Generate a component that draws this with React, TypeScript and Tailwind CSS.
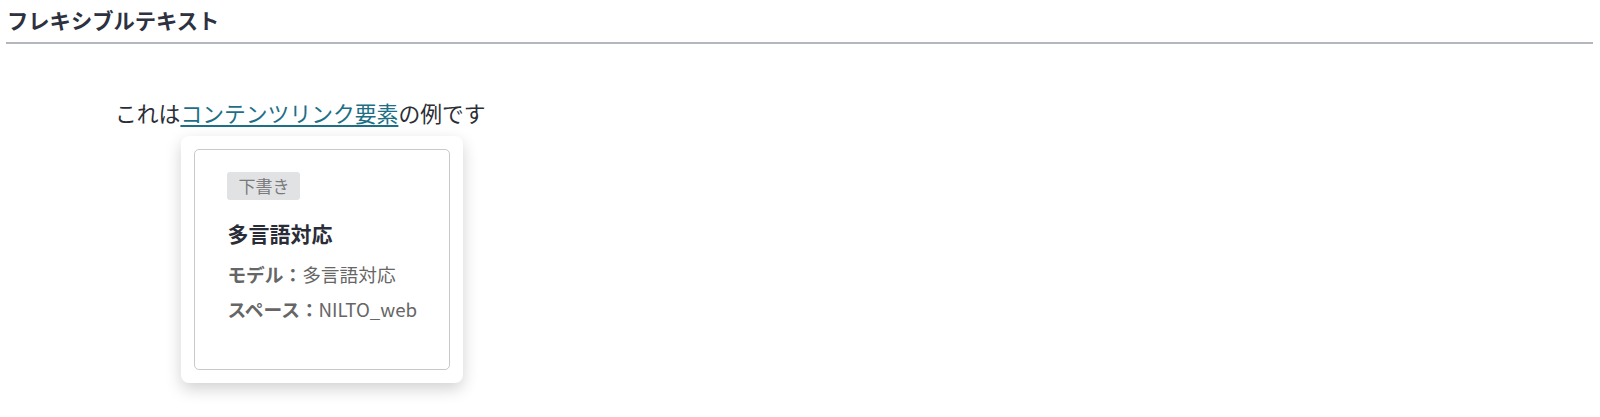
import React from "react";

const font = { fontFamily: '"Noto Sans CJK JP", "Noto Sans", sans-serif' };

export default function App() {
  return (
    <div className="w-[1600px] h-[417px] bg-white text-[#2c2f3a] [text-spacing-trim:space-all]" style={font}>
      <div className="px-[6px] pt-[6px]">
        <h2 className="text-[21.3px] font-bold leading-[28px] pl-[1px] text-[#2e3140] pb-[8px] border-b-2 border-[#b3b6bc] w-[1587px]">
          フレキシブルテキスト
        </h2>
      </div>
      <p className="mt-[54px] ml-[115px] text-[21.8px] leading-[30px] text-[#2b2e36]">
        これは
        <span className="relative inline-block">
          <a href="#" className="text-[#1d6f86] underline underline-offset-[3px] decoration-[1.5px]">
            コンテンツリンク要素
          </a>
          <div className="absolute left-[1px] top-[38px] w-[282px] h-[247px] bg-white rounded-[8px] shadow-[0_6px_16px_rgba(0,0,0,0.18)] p-[13px] text-left">
            <div className="h-full border border-[#c9c9cb] rounded-[5px] pt-[19px] pl-[32px]">
              <span className="inline-block bg-[#e1e2e4] text-[#7a7a7c] text-[17px] leading-[28px] px-[11px] rounded-[3px]">
                下書き
              </span>
              <div className="mt-[18px] text-[21px] font-bold leading-[30px] text-[#2a2d38]">多言語対応</div>
              <div className="mt-[14px] text-[18.7px] leading-[24px] text-[#666]">
                <span className="font-bold">モデル：</span>多言語対応
              </div>
              <div className="mt-[11px] text-[18.7px] leading-[24px] text-[#666]">
                <span className="font-bold">スペース：</span>NILTO_web
              </div>
            </div>
          </div>
        </span>
        の例です
      </p>
    </div>
  );
}
